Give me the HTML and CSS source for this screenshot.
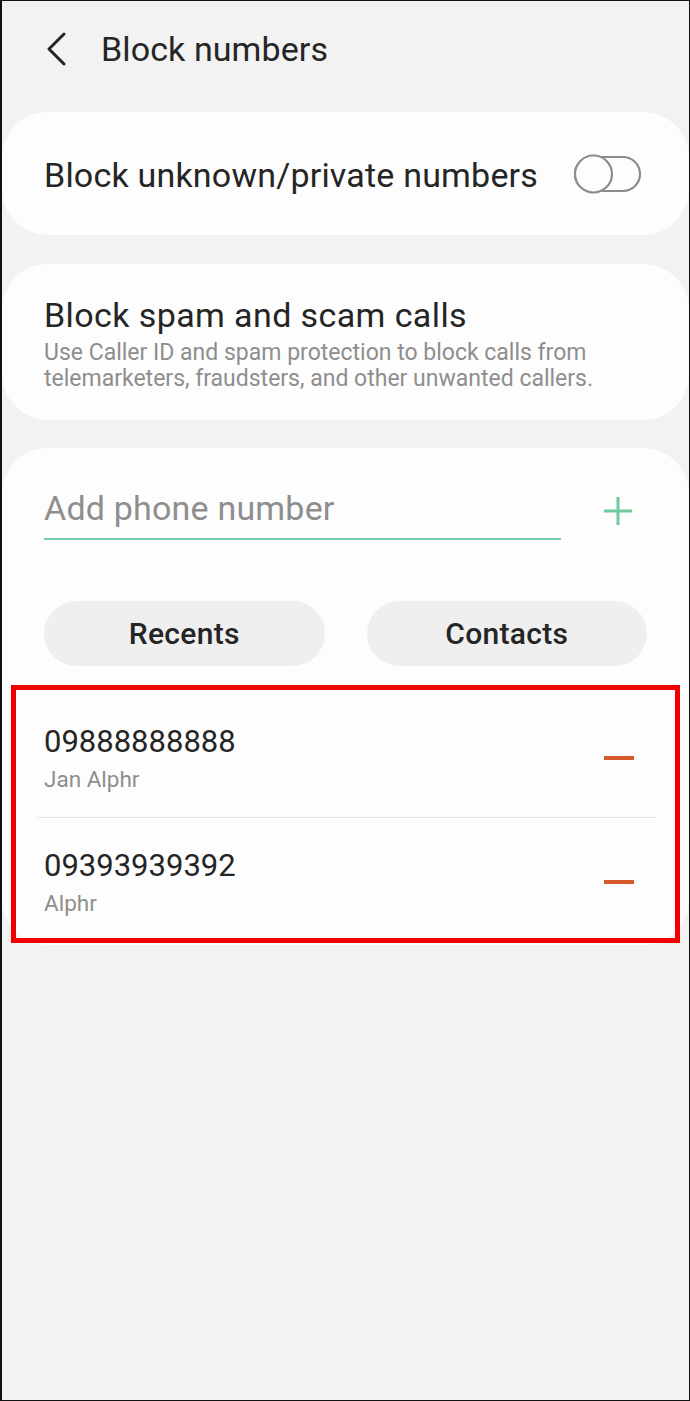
FILE: index.html
```html
<!DOCTYPE html>
<html lang="en">
<head>
<meta charset="utf-8">
<title>Block numbers</title>
<link rel="stylesheet" href="styles.css">
</head>
<body>
<div class="screen">
  <header class="topbar">
    <span class="back" aria-label="Back">
      <svg width="22" height="34" viewBox="0 0 22 34"><path d="M19 2 L4 17 L19 32" fill="none" stroke="#252525" stroke-width="3" stroke-linecap="round" stroke-linejoin="round"/></svg>
    </span>
    <h1 class="title">Block numbers</h1>
  </header>

  <section class="card card-toggle">
    <span class="toggle-label">Block unknown/private numbers</span>
    <svg class="switch" width="70" height="42" viewBox="0 0 70 42"><rect x="2" y="4" width="65" height="34" rx="17" fill="#fdfdfd" stroke="#8c8c8c" stroke-width="2.2"/><circle cx="20.5" cy="21" r="18.5" fill="#fdfdfd" stroke="#8c8c8c" stroke-width="2.2"/></svg>
  </section>

  <section class="card card-spam">
    <h2 class="spam-title">Block spam and scam calls</h2>
    <p class="spam-sub">Use Caller ID and spam protection to block calls from telemarketers, fraudsters, and other unwanted callers.</p>
  </section>

  <section class="card card-list">
    <div class="add-row">
      <div class="field">Add phone number</div>
      <svg class="plus" width="30" height="30" viewBox="0 0 30 30"><path d="M15 1 V29 M1 15 H29" stroke="#6fcb9c" stroke-width="3"/></svg>
    </div>
    <div class="btn-row">
      <div class="pill">Recents</div>
      <div class="pill">Contacts</div>
    </div>
    <div class="highlight">
      <div class="num-row first">
        <div class="num-text">
          <div class="number">09888888888</div>
          <div class="name">Jan Alphr</div>
        </div>
        <span class="minus"></span>
      </div>
      <div class="divider"></div>
      <div class="num-row second">
        <div class="num-text">
          <div class="number">09393939392</div>
          <div class="name">Alphr</div>
        </div>
        <span class="minus"></span>
      </div>
    </div>
  </section>
</div>
</body>
</html>
```

FILE: styles.css
```css
html, body {
  margin: 0;
  padding: 0;
  background: #f2f2f2;
}

.screen {
  width: 690px;
  height: 1401px;
  box-sizing: border-box;
  border: 1px solid #111;
  border-left-width: 2px;
  background: #f2f2f2;
  font-family: Roboto, "Liberation Sans", sans-serif;
  color: #252525;
  overflow: hidden;
}

.topbar {
  height: 111px;
  box-sizing: border-box;
  padding: 29px 0 0 43px;
  display: flex;
  align-items: flex-start;
}

.back {
  display: block;
  width: 22px;
  height: 34px;
  margin-top: 2px;
}

.back svg { display: block; }

.title {
  margin: 0 0 0 34px;
  font-size: 34px;
  line-height: 38px;
  font-weight: 400;
  letter-spacing: 0.1px;
}

.card {
  background: #fdfdfd;
  border-radius: 46px;
}

.card-toggle {
  height: 123px;
  display: flex;
  align-items: center;
  justify-content: space-between;
  padding: 0 46px 0 42px;
}

.toggle-label {
  font-size: 34px;
  line-height: 38px;
  letter-spacing: 0.2px;
  margin-top: 3px;
}

.switch { display: block; margin-top: 1px; }

.card-spam {
  margin-top: 29px;
  height: 156px;
  box-sizing: border-box;
  padding: 32px 30px 0 42px;
}

.spam-title {
  margin: 0;
  font-size: 34px;
  line-height: 38px;
  font-weight: 400;
  letter-spacing: 0.4px;
}

.spam-sub {
  margin: 6px 0 0;
  font-size: 23px;
  line-height: 26px;
  color: #8e8e8e;
}

.card-list {
  margin-top: 28px;
  padding: 41px 0 2px;
}

.add-row {
  display: flex;
  align-items: flex-start;
  padding: 0 56px 0 42px;
}

.field {
  width: 517px;
  box-sizing: border-box;
  font-size: 34px;
  line-height: 38px;
  letter-spacing: 0.2px;
  color: #8e8e8e;
  padding-bottom: 11px;
  border-bottom: 2px solid #78cba6;
}

.plus {
  display: block;
  margin: 7px 0 0 auto;
}

.btn-row {
  display: grid;
  grid-template-columns: 1fr 1fr;
  gap: 42px;
  padding: 0 42px 0 42px;
  margin-top: 61px;
}

.pill {
  height: 65px;
  border-radius: 33px;
  background: #efefef;
  display: flex;
  align-items: center;
  justify-content: center;
  font-size: 30px;
  font-weight: 500;
  letter-spacing: 0.3px;
  color: #252525;
}

.highlight {
  margin: 19px 9px 0;
  border: 5px solid #f00000;
}

.num-row {
  display: flex;
  align-items: center;
  justify-content: space-between;
  padding: 0 41px 0 28px;
}

.num-row.first { padding-top: 34px; padding-bottom: 25px; }
.num-row.second { padding-top: 30px; padding-bottom: 22px; }

.number {
  font-size: 31px;
  line-height: 36px;
  color: #252525;
}

.name {
  margin-top: 6px;
  font-size: 22.5px;
  line-height: 26px;
  color: #8e8e8e;
}

.minus {
  display: block;
  width: 30px;
  height: 3.5px;
  background: #d75a2c;
  margin-top: 0;
}

.divider {
  height: 1px;
  background: #e6e6e6;
  margin: 0 19px 0 21px;
}
```
